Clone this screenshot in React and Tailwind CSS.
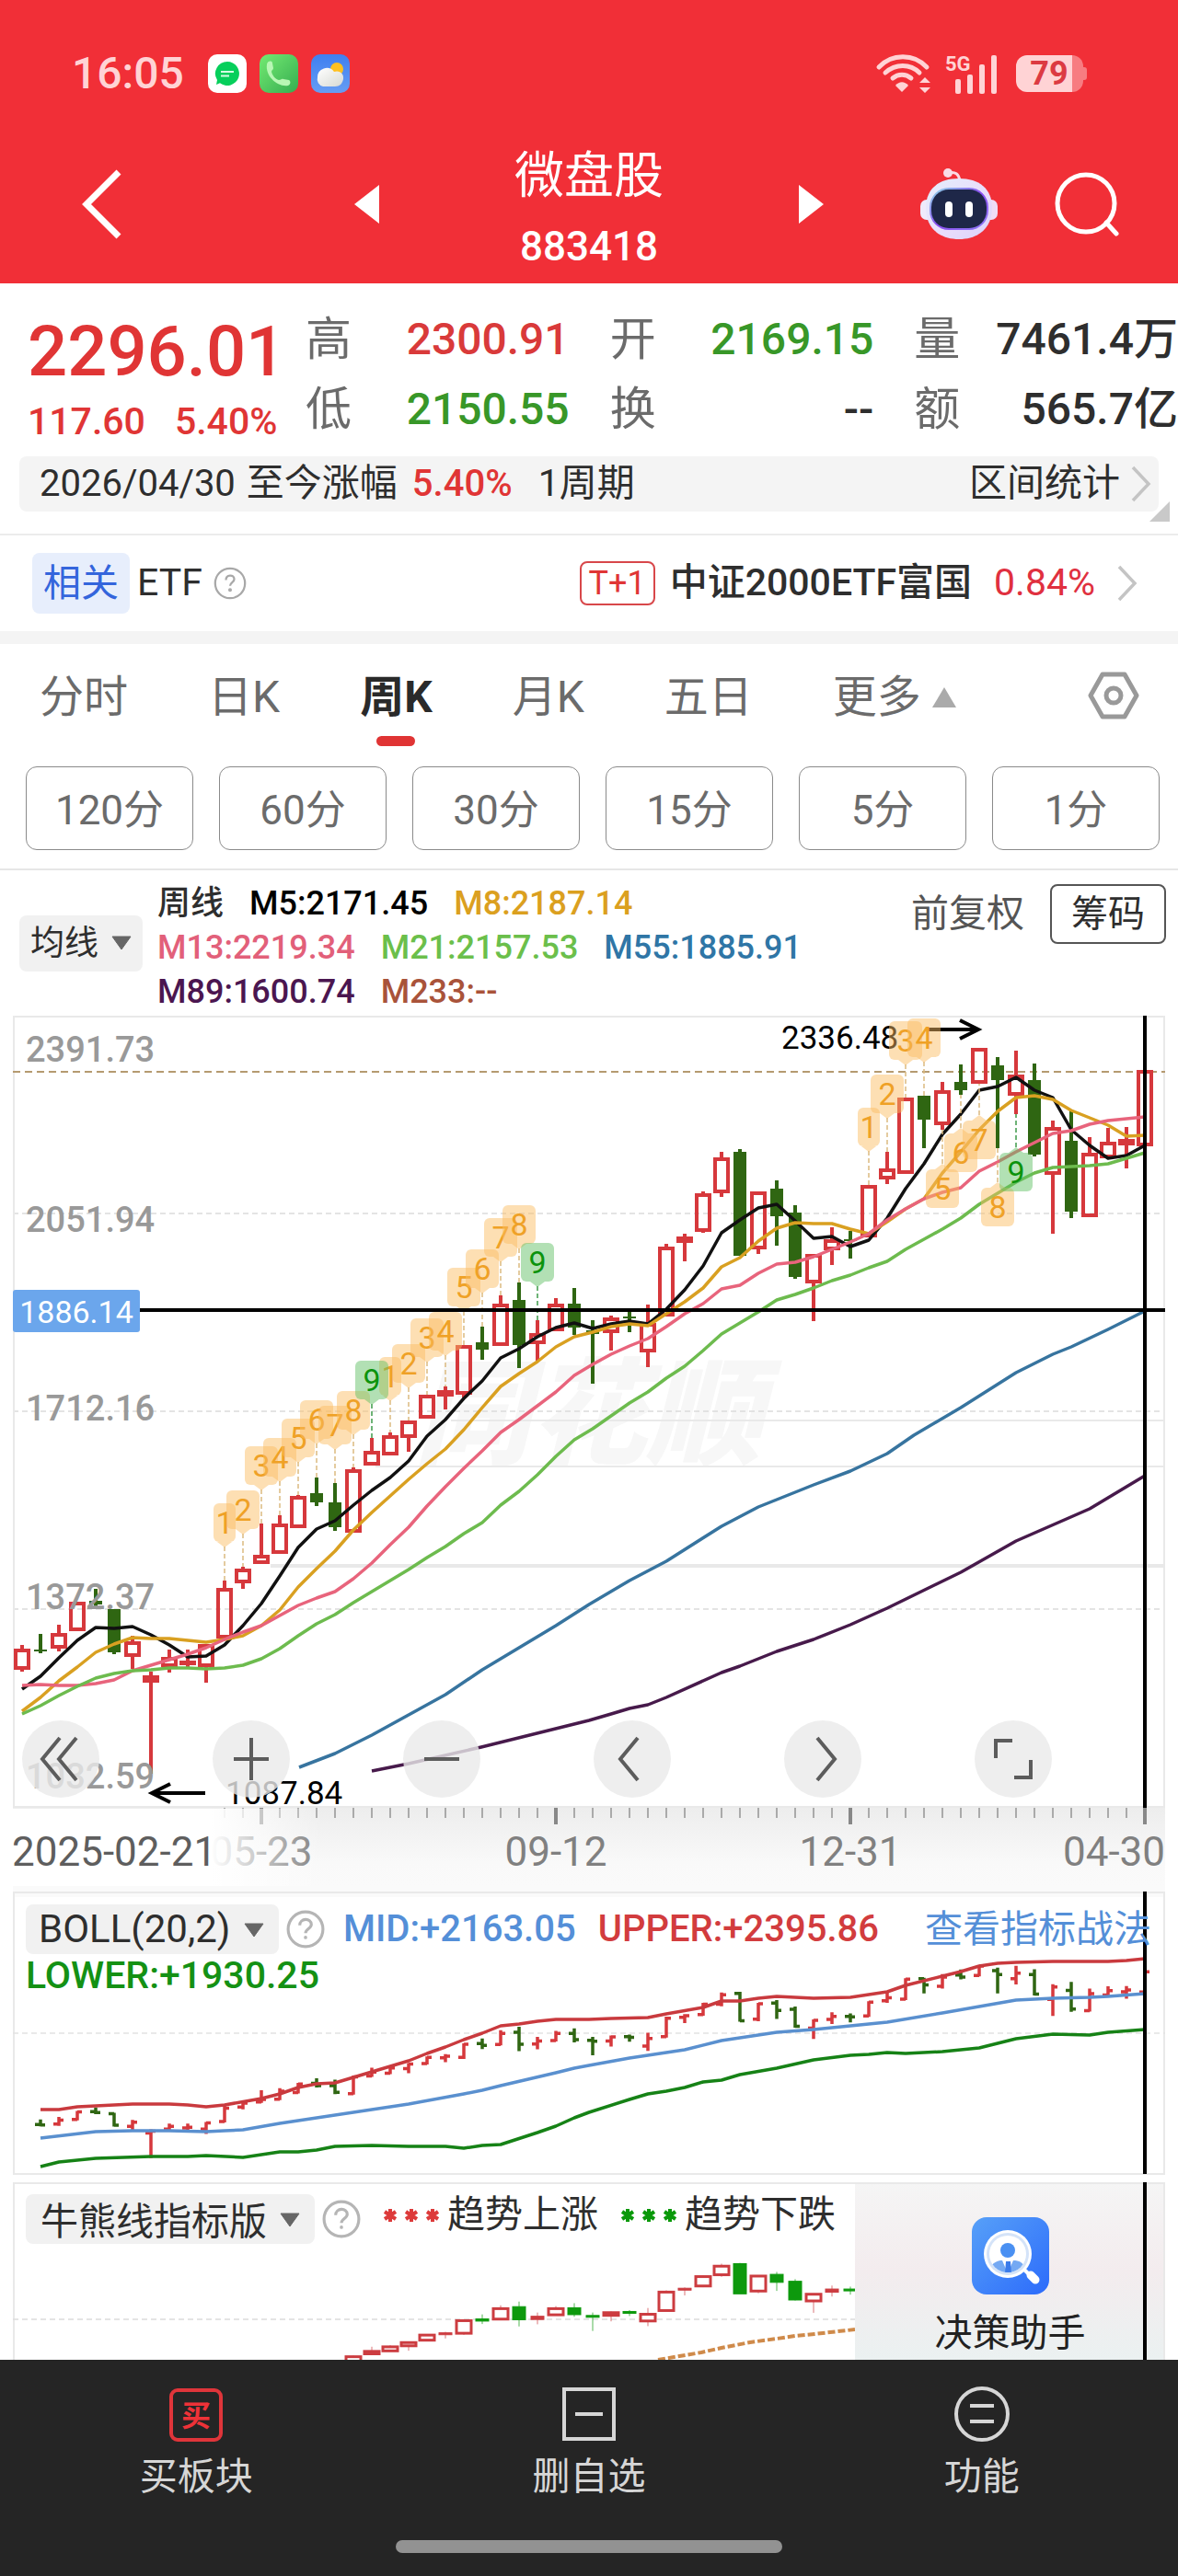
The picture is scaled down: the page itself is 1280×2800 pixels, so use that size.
import React, { useState } from "react";

// [high, body top, body bottom, low, up] in chart units, one entry per week
const candles = [
  [1788, 1792, 1815, 1817, 1], [1776, 1793, 1795, 1797, 0], [1766, 1775, 1792, 1795, 1],
  [1741, 1741, 1773, 1773, 1], [1727, 1740, 1744, 1747, 0], [1749, 1749, 1796, 1798, 0],
  [1778, 1784, 1801, 1814, 1], [1817, 1821, 1829, 1928, 1], [1793, 1801, 1812, 1818, 1],
  [1793, 1805, 1808, 1813, 1], [1787, 1787, 1812, 1829, 1], [1718, 1726, 1781, 1781, 1],
  [1703, 1705, 1721, 1727, 1], [1656, 1690, 1700, 1700, 1], [1647, 1656, 1689, 1689, 1],
  [1625, 1626, 1661, 1661, 1], [1606, 1623, 1633, 1637, 0], [1612, 1633, 1660, 1664, 0],
  [1595, 1597, 1666, 1666, 1], [1563, 1577, 1593, 1593, 1], [1557, 1560, 1582, 1582, 1],
  [1544, 1544, 1563, 1578, 1], [1516, 1516, 1542, 1542, 1], [1507, 1511, 1518, 1532, 1],
  [1462, 1462, 1516, 1519, 1], [1442, 1459, 1467, 1478, 0], [1408, 1417, 1463, 1463, 1],
  [1394, 1413, 1462, 1487, 0], [1435, 1449, 1461, 1479, 1], [1411, 1417, 1447, 1447, 1],
  [1400, 1417, 1443, 1451, 0], [1435, 1446, 1450, 1504, 0], [1430, 1432, 1449, 1468, 1],
  [1426, 1431, 1433, 1448, 0], [1418, 1438, 1470, 1486, 1], [1352, 1355, 1431, 1431, 1],
  [1341, 1344, 1351, 1371, 1], [1295, 1297, 1339, 1340, 1], [1252, 1258, 1297, 1301, 1],
  [1249, 1252, 1365, 1365, 0], [1295, 1295, 1358, 1363, 1], [1283, 1292, 1322, 1354, 0],
  [1310, 1318, 1388, 1390, 0], [1363, 1363, 1395, 1436, 1], [1334, 1347, 1359, 1375, 1],
  [1338, 1347, 1349, 1368, 0], [1288, 1288, 1345, 1345, 1], [1252, 1270, 1282, 1287, 1],
  [1193, 1193, 1276, 1276, 1], [1191, 1191, 1217, 1248, 0], [1176, 1185, 1223, 1228, 1],
  [1157, 1176, 1185, 1190, 0], [1139, 1139, 1178, 1178, 1], [1149, 1158, 1174, 1248, 0],
  [1142, 1168, 1191, 1211, 1], [1156, 1174, 1255, 1257, 0], [1218, 1225, 1277, 1341, 1],
  [1208, 1240, 1317, 1324, 0], [1236, 1253, 1323, 1323, 1], [1226, 1241, 1259, 1260, 1],
  [1225, 1238, 1245, 1270, 1], [1163, 1163, 1246, 1246, 1],
];

const STEP = 20;
const xOf = (i) => 24 + i * STEP;

const ma5 = [
  1836, 1822, 1802, 1783, 1769, 1770, 1768, 1777, 1788, 1801, 1800, 1788, 1767, 1743, 1713, 1682,
  1662, 1653, 1636, 1620, 1606, 1588, 1561, 1543, 1520, 1501, 1476, 1466, 1453, 1443, 1438, 1444,
  1439, 1436, 1439, 1423, 1402, 1376, 1340, 1326, 1313, 1309, 1327, 1346, 1344, 1355, 1348, 1324,
  1292, 1265, 1233, 1211, 1185, 1181, 1171, 1185, 1193, 1228, 1245, 1259, 1256, 1245,
];
const ma8 = [
  1860, 1845, 1827, 1812, 1796, 1787, 1780, 1781, 1781, 1783, 1785, 1782, 1778, 1767, 1750, 1725,
  1705, 1686, 1663, 1644, 1626, 1608, 1591, 1575, 1554, 1530, 1507, 1493, 1480, 1464, 1453, 1448,
  1442, 1439, 1441, 1428, 1415, 1400, 1377, 1367, 1349, 1335, 1329, 1330, 1330, 1336, 1341, 1328,
  1314, 1303, 1275, 1252, 1228, 1208, 1193, 1191, 1195, 1207, 1215, 1223, 1235, 1234,
];
const ma13 = [
  1832, 1831, 1832, 1832, 1830, 1826, 1816, 1810, 1804, 1798, 1791, 1782, 1774, 1767, 1756, 1745,
  1737, 1730, 1716, 1699, 1679, 1660, 1637, 1616, 1596, 1577, 1557, 1543, 1528, 1513, 1495, 1483,
  1472, 1463, 1455, 1442, 1428, 1417, 1401, 1397, 1384, 1374, 1372, 1366, 1358, 1350, 1341, 1326,
  1314, 1303, 1296, 1291, 1273, 1263, 1252, 1242, 1232, 1229, 1222, 1218, 1216, 1214,
];
const ma21 = [
  1863, 1854, 1843, 1833, 1824, 1819, 1816, 1815, 1813, 1813, 1814, 1813, 1810, 1803, 1792, 1778,
  1765, 1755, 1742, 1730, 1718, 1706, 1693, 1681, 1667, 1655, 1636, 1621, 1603, 1583, 1565, 1553,
  1539, 1525, 1513, 1498, 1485, 1468, 1450, 1438, 1426, 1413, 1407, 1400, 1392, 1386, 1378, 1371,
  1358, 1347, 1336, 1324, 1309, 1297, 1285, 1275, 1269, 1268, 1267, 1265, 1259, 1253,
];
const ma55 =
  "325,1921 364,1906 404,1886 444,1864 484,1842 524,1815 564,1791 604,1767 640,1744 684,1718 724,1697 784,1659 824,1638 844,1630 884,1614 924,1599 964,1580 993,1560 1044,1530 1104,1492 1144,1472 1164,1464 1204,1445 1244,1425";
const ma89 =
  "404,1925 444,1917 523,1899 640,1870 664,1863 684,1857 704,1853 724,1845 784,1818 804,1811 844,1795 884,1782 924,1766 964,1748 1044,1709 1104,1675 1184,1640 1244,1604";

const toPoints = (values) => values.map((y, i) => `${xOf(i)},${y}`).join(" ");

// [label, candle index, badge top, position]
const badges = [
  ["1", 11, 1634], ["2", 12, 1620], ["3", 13, 1572], ["4", 14, 1563], ["5", 15, 1542],
  ["6", 16, 1522], ["7", 17, 1528], ["8", 18, 1512], ["1", 20, 1475], ["9", 19, 1479],
  ["2", 21, 1461], ["3", 22, 1433], ["4", 23, 1426], ["5", 24, 1378], ["6", 25, 1358],
  ["7", 26, 1324], ["8", 27, 1310], ["9", 28, 1351], ["1", 46, 1204], ["2", 47, 1168],
  ["3", 48, 1110], ["4", 49, 1107], ["5", 50, 1271, "below"], ["6", 51, 1232, "below"],
  ["7", 52, 1218, "below"], ["8", 53, 1291, "below"], ["9", 54, 1253, "below"],
];

const bollUpper =
  "44,2293 64,2293 84,2290 104,2289 144,2287 184,2287 204,2288 224,2290 244,2288 284,2281 304,2276 324,2269 344,2265 364,2264 384,2258 404,2252 424,2246 444,2240 464,2232 484,2225 504,2217 524,2210 544,2202 564,2200 584,2197 604,2195 640,2195 664,2194 704,2193 724,2189 764,2182 784,2175 804,2175 824,2172 844,2170 884,2172 924,2171 964,2165 984,2158 1024,2148 1044,2143 1064,2137 1084,2134 1104,2133 1144,2132 1204,2132 1224,2131 1244,2129";
const bollMid =
  "44,2324 104,2317 144,2316 184,2316 224,2317 244,2316 264,2315 304,2308 384,2296 444,2287 504,2276 524,2272 544,2267 604,2253 624,2248 640,2245 684,2237 724,2231 744,2228 784,2218 844,2209 884,2206 924,2202 964,2198 1024,2188 1064,2181 1104,2174 1144,2172 1184,2171 1204,2170 1244,2167";
const bollLower =
  "44,2355 64,2350 104,2346 164,2344 204,2344 224,2343 264,2345 304,2339 324,2339 344,2337 364,2333 404,2332 444,2333 484,2333 504,2335 524,2332 544,2331 584,2318 604,2311 624,2302 640,2296 684,2282 704,2276 724,2273 744,2269 764,2263 784,2261 804,2255 844,2248 884,2239 924,2234 944,2233 964,2231 984,2232 1024,2230 1064,2226 1084,2221 1104,2216 1144,2211 1184,2212 1204,2209 1244,2206";

const quotes = [
  ["高", "2300.91", "text-[#d93a3a]"],
  ["开", "2169.15", "text-[#389728]"],
  ["量", "7461.4万", "text-[#2e2e2e]"],
  ["低", "2150.55", "text-[#389728]"],
  ["换", "--", "text-[#2e2e2e]"],
  ["额", "565.7亿", "text-[#2e2e2e]"],
];

const averages = [
  [["周线", "text-[#2e2e2e]"], ["M5:2171.45", "text-black"], ["M8:2187.14", "text-[#dba01f]"]],
  [["M13:2219.34", "text-[#e2607a]"], ["M21:2157.53", "text-[#6bbf4b]"], ["M55:1885.91", "text-[#2f76a6]"]],
  [["M89:1600.74", "text-[#4b1650]"], ["M233:--", "text-[#a9533a]"]],
];

function Caret({ className = "" }) {
  return (
    <svg viewBox="0 0 22 16" className={`pointer-events-none h-4 w-[22px] ${className}`} aria-hidden="true">
      <path d="M1 1h20L11 15z" fill="#666" stroke="#666" strokeLinejoin="round" />
    </svg>
  );
}

function Help({ label }) {
  return (
    <button aria-label={label} className="shrink-0">
      <svg viewBox="0 0 40 40" className="size-[42px]" fill="none" stroke="#b5b5b5" strokeWidth="3">
        <circle cx="20" cy="20" r="18" />
        <path d="M14 16c0-8 12-8 12-1 0 4.500-6 4.500-6 9" />
        <circle cx="20" cy="28.500" r="1" fill="#b5b5b5" strokeWidth="1.500" />
      </svg>
    </button>
  );
}

function Chevron({ className }) {
  return (
    <svg viewBox="0 0 22 40" className={className} fill="none" stroke="#c4c4c4" strokeWidth="3.500" aria-hidden="true">
      <path d="M2 2l17 18L2 38" />
    </svg>
  );
}

function StatusBar() {
  return (
    <div className="flex h-[148px] items-center justify-between pt-3 pr-[98px] pl-[78px] text-[#ffd3d5]">
      <div className="flex items-center">
        <span className="text-[48px] leading-none font-medium">16:05</span>
        <div className="ml-[26px] flex gap-[14px]">
          <svg viewBox="0 0 42 42" className="size-[42px]">
            <rect width="42" height="42" rx="10" fill="#fff" />
            <path d="M21 8a13 13 0 1 1-8 23.300L9 33l1-5A13 13 0 0 1 21 8z" fill="#06cf5b" />
            <path d="M14 19h14M14 23.500h9" stroke="#d5fbe4" strokeWidth="2" />
          </svg>
          <svg viewBox="0 0 42 42" className="size-[42px]">
            <defs>
              <linearGradient id="phone" x2="1" y2="1">
                <stop stopColor="#74ea72" />
                <stop offset="1" stopColor="#35ad50" />
              </linearGradient>
            </defs>
            <rect width="42" height="42" rx="10" fill="url(#phone)" />
            <path
              d="M10 8c3-1 4 0 4 2l1 5c0 2-2 2-2 4 1 4 4 8 8 9 2 0 3-2 5-1l6 1c2 1 2 5-1 6C20 36 6 24 8 11c0-1 1-3 2-3z"
              fill="#b8f7b4"
            />
          </svg>
          <svg viewBox="0 0 42 42" className="size-[42px]">
            <defs>
              <linearGradient id="sky" x2="0" y2="1">
                <stop stopColor="#3f7ff0" />
                <stop offset="1" stopColor="#669df4" />
              </linearGradient>
              <linearGradient id="cloud" x2="1" y2="1">
                <stop stopColor="#fff" />
                <stop offset="1" stopColor="#d7d9d3" />
              </linearGradient>
            </defs>
            <rect width="42" height="42" rx="10" fill="url(#sky)" />
            <circle cx="28" cy="16" r="7" fill="#ffc01f" />
            <path d="M13 35a8 8 0 0 1-6-10 10 10 0 0 1 18-6c6-2 11 2 10 8-1 5-4 8-9 8z" fill="url(#cloud)" />
          </svg>
        </div>
      </div>
      <div className="flex items-center">
        <svg viewBox="0 0 60 44" className="h-11 w-[60px]" fill="none" stroke="#ffd3d5" strokeWidth="5" strokeLinecap="round">
          <path d="M4 15c14-15 38-15 52 0M11 21c11-10 27-10 37 0M19 27c6-5 14-5 20 0" />
          <path d="M29 42l-7-7c4-5 10-5 14 0z" fill="#ffd3d5" stroke="none" />
          <path d="M48 32l6-6 6 6zM48 37l6 6 6-6z" fill="#ffd3d5" stroke="none" />
        </svg>
        <svg viewBox="0 0 58 52" className="mb-2 ml-4 h-[52px] w-[58px]" fill="#ffd3d5">
          <text x="0" y="27" fontSize="22" fontWeight="700">5G</text>
          <rect x="11" y="36" width="6" height="16" rx="2" />
          <rect x="24" y="31" width="6" height="21" rx="2" />
          <rect x="37" y="20" width="6" height="32" rx="2" />
          <rect x="50" y="10" width="6" height="42" rx="2" />
        </svg>
        <svg viewBox="0 0 78 40" className="ml-[19px] h-10 w-[78px]">
          <path d="M12 0h49v40H12A12 12 0 0 1 0 28V12A12 12 0 0 1 12 0z" fill="#ffd3d5" />
          <path d="M61 0a12 12 0 0 1 12 12v16a12 12 0 0 1-12 12z" fill="#f77c81" />
          <path d="M73 13h1a3 3 0 0 1 3 3v8a3 3 0 0 1-3 3h-1z" fill="#f77c81" />
          <text x="36" y="32" fontSize="36" fontWeight="700" textAnchor="middle" fill="#dc3a42">79</text>
        </svg>
      </div>
    </div>
  );
}

function Header() {
  return (
    <header className="bg-[#f12f37] text-white">
      <StatusBar />
      <div className="grid h-40 grid-cols-[1fr_auto_1fr] items-center">
        <div className="mb-3 flex items-center justify-between pr-[147px] pl-[88px]">
          <button aria-label="返回">
            <svg viewBox="0 0 44 76" className="h-[76px] w-11" fill="none" stroke="#fff" strokeWidth="7">
              <path d="M41 3L6 38l35 35" />
            </svg>
          </button>
          <button aria-label="上一个">
            <svg viewBox="0 0 27 42" className="h-[42px] w-[27px]" fill="#fff">
              <path d="M27 0v42L0 21z" />
            </svg>
          </button>
        </div>
        <div className="pt-1 text-center leading-[76px]">
          <h1 className="text-[54px]">微盘股</h1>
          <p className="text-[44px] font-medium">883418</p>
        </div>
        <div className="mb-3 flex items-center pl-[147px]">
          <button aria-label="下一个">
            <svg viewBox="0 0 27 42" className="h-[42px] w-[27px]" fill="#fff">
              <path d="M0 0v42l27-21z" />
            </svg>
          </button>
          <button aria-label="智能助理" className="ml-[105px]">
            <svg viewBox="0 0 84 78" className="h-[78px] w-[84px]">
              <defs>
                <linearGradient id="shell" x2="1" y2="1">
                  <stop stopColor="#e4eefc" />
                  <stop offset="0.600" stopColor="#e9dcfb" />
                  <stop offset="1" stopColor="#d9d2fb" />
                </linearGradient>
                <linearGradient id="rim" x2="1" y2="1">
                  <stop stopColor="#8fe0e6" />
                  <stop offset="0.500" stopColor="#8a4df0" />
                  <stop offset="1" stopColor="#8f7cf5" />
                </linearGradient>
              </defs>
              <path d="M30 5c8-2 12 1 13 9" fill="none" stroke="#fbd9e3" strokeWidth="3" />
              <circle cx="30" cy="5" r="5" fill="#f9dbe6" />
              <rect x="0" y="34" width="16" height="22" rx="7" fill="#efeafb" />
              <rect x="68" y="34" width="16" height="22" rx="7" fill="#efdcf6" />
              <path d="M42 11c22 0 36 11 36 32 0 22-15 34-36 34S6 65 6 43c0-21 14-32 36-32z" fill="url(#shell)" />
              <rect x="10" y="21" width="64" height="46" rx="21" fill="url(#rim)" />
              <rect x="12" y="23" width="60" height="42" rx="19" fill="#1e2748" />
              <rect x="27" y="36" width="8" height="17" rx="4" fill="#fff" />
              <rect x="49" y="36" width="8" height="17" rx="4" fill="#fff" />
            </svg>
          </button>
          <button aria-label="搜索" className="ml-[62px]">
            <svg viewBox="0 0 72 72" className="size-[72px]" fill="none" stroke="#fff" strokeWidth="5">
              <circle cx="34" cy="35" r="31" />
              <path d="M56 56l11 12" strokeLinecap="round" />
            </svg>
          </button>
        </div>
      </div>
    </header>
  );
}

function QuoteSummary() {
  return (
    <section className="relative border-b-2 border-[#ececec] pb-6">
      <div className="flex">
        <div className="mt-9 w-[332px] shrink-0 pl-[30px] text-[#e03535]">
          <p className="text-[76px] leading-[76px] font-medium">2296.01</p>
          <p className="flex gap-8 text-[41px] leading-[76px] font-medium">
            <span>117.60</span>
            <span>5.40%</span>
          </p>
        </div>
        <dl className="mt-[23px] grid h-[152px] flex-1 grid-cols-3 gap-x-11 leading-[76px]">
          {quotes.map(([name, value, color]) => (
            <div key={name} className="flex justify-between whitespace-nowrap">
              <dt className="text-[50px] text-[#6b6b6b]">{name}</dt>
              <dd className={`text-[48px] font-medium ${color}`}>{value}</dd>
            </div>
          ))}
        </dl>
      </div>
      <div className="mx-[21px] flex h-[60px] items-center rounded-lg bg-[#f4f4f4] pr-2 pl-[22px] text-[41px] text-[#2e2e2e]">
        <span className="text-[40px]">2026/04/30</span>
        <span className="ml-3">至今涨幅</span>
        <span className="ml-4 text-[40px] font-medium text-[#e03535]">5.40%</span>
        <span className="ml-7">1周期</span>
        <button className="ml-auto flex items-center gap-3">
          区间统计
          <Chevron className="h-10 w-[22px]" />
        </button>
      </div>
      <svg viewBox="0 0 22 22" className="absolute right-[9px] bottom-[13px] size-[22px]" fill="#c9c9c9">
        <path d="M22 0v22H0z" />
      </svg>
    </section>
  );
}

function EtfRow() {
  return (
    <a
      href="#etf"
      className="flex h-[118px] items-center border-b-[14px] border-[#f4f4f4] pr-11 pl-[35px] text-[41px] text-[#2e2e2e]"
    >
      <span className="rounded-lg bg-[#e7eefc] px-3 leading-[66px] text-[#3465dc]">相关</span>
      <span className="mr-3 ml-2">ETF</span>
      <svg viewBox="0 0 40 40" className="size-9" fill="none" stroke="#a8a8a8" strokeWidth="2.500">
        <circle cx="20" cy="20" r="18" />
        <path d="M15 16c0-7 10-7 10-1 0 4-5 4-5 8" />
        <circle cx="20" cy="28" r="1" />
      </svg>
      <span className="ml-auto rounded-lg border-2 border-[#d8474a] px-2 text-[36px] leading-[44px] text-[#e03535]">T+1</span>
      <span className="ml-4 font-medium">中证2000ETF富国</span>
      <span className="ml-6 text-[#e0303f]">0.84%</span>
      <Chevron className="ml-6 h-10 w-[22px]" />
    </a>
  );
}

const tabs = ["分时", "日K", "周K", "月K", "五日"];
const minutes = ["120分", "60分", "30分", "15分", "5分", "1分"];

function PeriodTabs() {
  const [active, setActive] = useState("周K");

  return (
    <nav className="border-b-2 border-[#e6e6e6] pb-5">
      <div className="flex items-start gap-[87px] pr-[42px] pl-[43px] text-[48px] leading-[76px] text-[#6b6b6b]">
        {tabs.map((tab) => (
          <button key={tab} onClick={() => setActive(tab)} className="flex h-[113px] flex-col items-center pt-5">
            <span className={active === tab ? "font-bold text-[#2a2a2a]" : ""}>{tab}</span>
            {active === tab && <span className="mt-1 h-[11px] w-[42px] shrink-0 rounded-md bg-[#e03434]" />}
          </button>
        ))}
        <button className="flex items-center gap-3 pt-5">
          更多
          <svg viewBox="0 0 26 22" className="h-[22px] w-[26px]" fill="#aaa">
            <path d="M13 0l13 22H0z" />
          </svg>
        </button>
        <button aria-label="设置" className="ml-auto pt-[30px]">
          <svg viewBox="0 0 56 52" className="h-[52px] w-14" fill="none" stroke="#999" strokeWidth="5" strokeLinejoin="round">
            <path d="M16 3h24l13 23-13 23H16L3 26z" />
            <circle cx="28" cy="26" r="8" />
          </svg>
        </button>
      </div>
      <div className="mt-5 grid grid-cols-6 gap-7 pr-5 pl-7">
        {minutes.map((label) => (
          <button key={label} className="h-[91px] rounded-xl border border-[#8a8a8a] pt-1 text-[44px] text-[#6b6b6b]">
            {label}
          </button>
        ))}
      </div>
    </nav>
  );
}

function AverageLegend() {
  return (
    <section className="flex px-[21px] pt-3 pb-0.5 text-[36px]">
      <label className="relative mt-[37px] h-[61px] self-start rounded-lg bg-[#f1f1f1]">
        <select aria-label="均线" className="h-full appearance-none pr-12 pl-3 text-[37px] text-[#2e2e2e]">
          <option>均线</option>
        </select>
        <Caret className="absolute top-[22px] right-3" />
      </label>
      <div className="ml-4 leading-[48px] font-medium">
        {averages.map((row, i) => (
          <div key={i} className="flex gap-7">
            {row.map(([text, color]) => (
              <span key={text} className={color}>{text}</span>
            ))}
          </div>
        ))}
      </div>
      <div className="mt-[3px] -mr-2 ml-auto flex h-[65px] gap-7">
        <button className="text-[41px] text-[#555]">前复权</button>
        <button className="w-[126px] rounded-lg border-2 border-[#555] text-[40px] text-[#2e2e2e]">筹码</button>
      </div>
    </section>
  );
}

function Badge({ label, index, top, below }) {
  const x = xOf(index);
  const half = label === "1" ? 12 : 18;
  const green = label === "9";
  const fill = green ? "#5fc063" : "#fbbd62";
  const tip = below ? top - 6 : top + 47;
  const [high, , , low] = candles[index];

  return (
    <g>
      <path
        d={`M${x} ${tip}V${below ? low : high}`}
        stroke={green ? "#3e9a4a" : "#dcbb80"}
        strokeWidth="1.500"
        strokeDasharray="5 3"
      />
      <g fill={fill} opacity="0.480">
        <rect x={x - half} y={top} width={half * 2} height="42" rx="6" />
        <path d={below ? `M${x - 8} ${top}l8-6 8 6z` : `M${x - 8} ${top + 42}l8 6 8-6z`} />
      </g>
      <text x={x} y={top + 33} fontSize="34" textAnchor="middle" fill={green ? "#0c930c" : "#efa126"}>
        {label}
      </text>
    </g>
  );
}

function Candle({ index, data }) {
  const [high, top, bottom, low, up] = data;
  const x = xOf(index);

  if (!up) {
    return (
      <g fill="#2f6612">
        <rect x={x - 2} y={high} width="4" height={low - high} />
        <rect x={x - 7} y={top} width="14" height={bottom - top} />
      </g>
    );
  }
  return (
    <g stroke="#d6383c" strokeWidth="4" fill="none">
      <path d={`M${x} ${high}V${top}M${x} ${bottom}V${low}`} />
      <rect x={x - 7} y={top + 2} width="14" height={Math.max(bottom - top - 4, 1)} />
    </g>
  );
}

const controls = [
  ["快退", "M41 19L22 42l19 23M59 19L40 42l19 23"],
  ["放大", "M42 19v46M23 42h38"],
  ["缩小", "M23 42h38"],
  ["左移", "M48 19L29 42l19 23"],
  ["右移", "M36 19l19 23-19 23"],
  ["全屏", "M41 22H23v19M43 62h18V43"],
];

function MainChart() {
  const ticks = candles.map((_, i) => i).filter((i) => i >= 11);

  return (
    <section className="relative">
      <svg viewBox="0 1104 1280 946" className="block w-full">
        <defs>
          <linearGradient id="strip" x2="0" y2="1">
            <stop stopColor="#ededed" />
            <stop offset="0.700" stopColor="#f9f9f9" />
            <stop offset="1" stopColor="#fafafa" />
          </linearGradient>
          <linearGradient id="fade">
            <stop offset="0.640" stopColor="#fff" />
            <stop offset="1" stopColor="#fff" stopOpacity="0" />
          </linearGradient>
        </defs>

        <text x="828" y="1582" fontSize="126" fontWeight="900" fontStyle="italic" textAnchor="end" fill="#f7f7f7">
          同花顺
        </text>
        <g stroke="#e9e9e9" fill="none">
          <path d="M490 1544H1266M408 1594H1266" strokeWidth="2" />
          <path d="M294 1702H1266" strokeWidth="4" />
          <path d="M14 1319H1266M14 1534H1266M14 1749H1266" stroke="#dcdcdc" strokeWidth="1.500" strokeDasharray="6 4" />
          <rect x="15" y="1105" width="1250" height="859" strokeWidth="2" />
        </g>
        <path d="M14 1165H1266" stroke="#b59a70" strokeWidth="2" strokeDasharray="8 5" />

        {candles.map((data, i) => (
          <Candle key={i} index={i} data={data} />
        ))}

        <g fill="none" strokeWidth="3.500" strokeLinejoin="round">
          <polyline points={toPoints(ma5)} stroke="#111" />
          <polyline points={toPoints(ma8)} stroke="#d9a021" />
          <polyline points={toPoints(ma13)} stroke="#e8647c" />
          <polyline points={toPoints(ma21)} stroke="#6dbb4e" />
          <polyline points={ma55} stroke="#37749f" />
          <polyline points={ma89} stroke="#471a4b" />
        </g>

        <g fontSize="38" fontWeight="500" fill="#999">
          <text x="28" y="1154">2391.73</text>
          <text x="28" y="1339">2051.94</text>
          <text x="28" y="1544">1712.16</text>
          <text x="28" y="1749">1372.37</text>
          <text x="28" y="1944">1032.59</text>
        </g>

        <g fontSize="35" fill="#000">
          <text x="849" y="1140">2336.48</text>
          <text x="245" y="1961">1087.84</text>
        </g>
        <g fill="none" stroke="#000" strokeWidth="4">
          <path d="M1007 1119h56M1043 1109l20 10-20 10" />
          <path d="M223 1949h-58M185 1939l-20 10 20 10" />
        </g>

        {badges.map(([label, index, top, place]) => (
          <Badge key={index} label={label} index={index} top={top} below={place === "below"} />
        ))}

        <path d="M152 1424H1266M1244 1104V1965" stroke="#000" strokeWidth="4" />
        <rect x="14" y="1402" width="138" height="46" rx="3" fill="#6ba6ec" />
        <text x="83" y="1438" fontSize="34" textAnchor="middle" fill="#fff">1886.14</text>

        <rect x="14" y="1965" width="1252" height="85" fill="url(#strip)" />
        {ticks.map((i) => {
          const major = i % 16 === 13;
          return (
            <rect
              key={i}
              x={xOf(i) - (major ? 2 : 1)}
              y="1965"
              width={major ? 4 : 2}
              height={major ? 18 : 11}
              fill={major ? "#888" : "#aaa"}
            />
          );
        })}
        <g fontSize="44" fill="#808080" textAnchor="middle">
          <text x="284" y="2028">05-23</text>
          <text x="604" y="2028">09-12</text>
          <text x="924" y="2028">12-31</text>
          <text x="1266" y="2028" textAnchor="end">04-30</text>
        </g>
        <rect x="14" y="1966" width="336" height="84" fill="url(#fade)" />
        <text x="13" y="2028" fontSize="44" fill="#5e5e5e">2025-02-21</text>
      </svg>

      <div className="absolute inset-x-0 bottom-24 flex gap-[123px] pl-6">
        {controls.map(([label, path]) => (
          <button key={label} aria-label={label} className="size-[84px] rounded-full bg-[#eaeaea]/80">
            <svg viewBox="0 0 84 84" fill="none" stroke="#5c5c5c" strokeWidth="4">
              <path d={path} />
            </svg>
          </button>
        ))}
      </div>
    </section>
  );
}

// week bars share the price data with the main chart, only the scale is flatter
const bollY = (y) => 2137 + (y - 1139) * 0.2632;
const trendY = (y) => 2460.5 + (y - 1252) * 0.2903;

function BollPanel() {
  return (
    <section className="relative">
      <svg viewBox="0 2050 1280 316" className="block w-full">
        <rect x="14" y="2050" width="1252" height="12" fill="#fafafa" />
        <rect x="15" y="2057" width="1250" height="306" fill="none" stroke="#e9e9e9" strokeWidth="2" />
        <path d="M14 2210H1266" stroke="#e2e2e2" strokeWidth="1.500" strokeDasharray="6 4" />
        {candles.slice(1).map(([high, top, bottom, low, up], n) => {
          const x = xOf(n + 1);
          const open = bollY(up ? bottom : top);
          const close = bollY(up ? top : bottom);
          return (
            <path
              key={n}
              d={`M${x} ${bollY(high) - 1}V${bollY(low) + 1}M${x - 6} ${open}H${x}M${x} ${close}h5`}
              stroke={up ? "#d6383c" : "#2f6612"}
              strokeWidth="3.500"
            />
          );
        })}
        <g fill="none" strokeWidth="3.500" strokeLinejoin="round">
          <polyline points={bollUpper} stroke="#c93a3e" />
          <polyline points={bollMid} stroke="#5a90cf" />
          <polyline points={bollLower} stroke="#168216" />
        </g>
        <path d="M1244 2056V2363" stroke="#000" strokeWidth="4" />
      </svg>
      <div className="absolute inset-x-0 top-5 pl-7 text-[40px] leading-[46px] font-medium">
        <div className="flex h-[54px] items-center">
          <label className="relative h-full rounded-lg bg-[#f1f1f1]">
            <select
              aria-label="指标"
              className="h-full appearance-none pr-[52px] pl-[14px] text-[42px] leading-[54px] font-normal text-[#2e2e2e]"
            >
              <option>BOLL(20,2)</option>
            </select>
            <Caret className="absolute top-5 right-4" />
          </label>
          <span className="ml-2 flex">
            <Help label="指标说明" />
          </span>
          <span className="ml-5 text-[#548fd8]">MID:+2163.05</span>
          <span className="ml-6 text-[#d23c3e]">UPPER:+2395.86</span>
          <a href="#guide" className="mr-[29px] ml-auto text-[41px] font-normal text-[#548fd8]">查看指标战法</a>
        </div>
        <p className="text-[41px] text-[#149114]">LOWER:+1930.25</p>
      </div>
    </section>
  );
}

function TrendPanel() {
  return (
    <section className="relative overflow-hidden">
      <button className="absolute top-1.5 right-[14px] flex h-[193px] w-[337px] flex-col items-center bg-linear-to-b from-[#f5f5f5] via-[#f3ecee] to-[#ebf1f1] pt-[38px]">
        <svg viewBox="0 0 84 84" className="size-[84px] shrink-0">
          <defs>
            <linearGradient id="assist" x2="1" y2="1">
              <stop stopColor="#57a0f8" />
              <stop offset="1" stopColor="#2c6bfb" />
            </linearGradient>
            <clipPath id="lens">
              <circle cx="39" cy="40" r="20" />
            </clipPath>
          </defs>
          <rect width="84" height="84" rx="16" fill="url(#assist)" />
          <path d="M57 57l5 5" stroke="#fff" strokeWidth="4" />
          <path d="M64 63l5 5" stroke="#fff" strokeWidth="9" strokeLinecap="round" />
          <circle cx="39" cy="40" r="26" fill="#fff" />
          <circle cx="39" cy="40" r="23" fill="#d4e3f8" />
          <circle cx="39" cy="40" r="20" fill="#fff" />
          <g clipPath="url(#lens)">
            <circle cx="39" cy="36" r="8" fill="#4a90f2" />
            <path d="M18 61c2-11 9-14 15-14l6 14 6-14c7 0 13 3 15 14z" fill="#74a9f3" />
            <path d="M37 48h5l1 13h-7z" fill="#3b7bea" />
          </g>
        </svg>
        <span className="mt-3 text-[41px] leading-[60px] text-[#222]">决策助手</span>
      </button>
      <svg viewBox="0 2366 1280 199" className="pointer-events-none relative block w-full">
        <defs>
          <clipPath id="trend">
            <rect x="14" y="2366" width="915" height="199" />
          </clipPath>
        </defs>
        <path d="M15 2565V2373H1265V2565" fill="none" stroke="#e9e9e9" strokeWidth="2" />
        <path d="M14 2521H929" stroke="#dcdcdc" strokeWidth="1.500" strokeDasharray="6 4" />
        <g clipPath="url(#trend)">
          {candles.map(([high, top, bottom, low, up], i) => {
            const x = xOf(i);
            const y = trendY(top);
            const height = Math.max(trendY(bottom) - y, 2);
            const color = up ? "#cc3c40" : "#0d990d";
            if (i < 18) return null;
            return (
              <g key={i} stroke={color}>
                <path d={`M${x} ${trendY(high)}V${y}M${x} ${y + height}V${trendY(low)}`} opacity="0.700" />
                {up && height > 4 ? (
                  <rect x={x - 8} y={y + 1} width="16" height={height - 2} fill="#fff" strokeWidth="3" />
                ) : (
                  <rect x={x - 7} y={y} width="14" height={height} fill={color} />
                )}
              </g>
            );
          })}
          <polyline
            points="715,2565 762,2557 784,2552 815,2546 844,2542 864,2539 885,2537 929,2532"
            fill="none"
            stroke="#cf8a4a"
            strokeWidth="4"
            strokeDasharray="8 3"
          />
        </g>
        <path d="M1244 2372V2565" stroke="#000" strokeWidth="4" />
      </svg>
      <div className="absolute top-[19px] left-7 flex h-[54px] items-center text-[41px] text-[#2e2e2e]">
        <label className="relative h-full rounded-lg bg-[#f1f1f1]">
          <select aria-label="副图指标" className="h-full appearance-none pr-[52px] pl-4 leading-[54px]">
            <option>牛熊线指标版</option>
          </select>
          <Caret className="absolute top-5 right-4" />
        </label>
        <span className="ml-2 flex">
          <Help label="牛熊线说明" />
        </span>
        <span className="mb-2 ml-6 flex items-center gap-2">
          <Stars className="text-[#dd3a3a]" />
          趋势上涨
        </span>
        <span className="mb-2 ml-6 flex items-center gap-2">
          <Stars className="text-[#0a990a]" />
          趋势下跌
        </span>
      </div>
    </section>
  );
}

function Stars({ className }) {
  return (
    <svg viewBox="0 0 62 18" className={`h-[18px] w-[62px] ${className}`} stroke="currentColor" strokeWidth="4" aria-hidden="true">
      {[8, 31, 54].map((x) => (
        <path key={x} d={`M${x} 2v14M${x - 6} 5l12 8M${x + 6} 5l-12 8`} />
      ))}
    </svg>
  );
}

function BottomBar() {
  return (
    <footer className="flex h-[235px] flex-col bg-[#252525] text-[41px] text-[#d6d6d6]">
      <div className="grid grid-cols-3 pt-7">
        <button className="flex flex-col items-center">
          <svg viewBox="0 0 60 62" className="h-[62px] w-[60px]">
            <rect x="3" y="5" width="54" height="54" rx="7" fill="none" stroke="#e0353a" strokeWidth="4" />
            <text x="30" y="44" fontSize="32" fontWeight="700" textAnchor="middle" fill="#ee3238">买</text>
          </svg>
          <span className="mt-1.5 leading-[62px]">买板块</span>
        </button>
        <button className="flex flex-col items-center">
          <svg viewBox="0 0 60 62" className="h-[62px] w-[60px]" fill="none" stroke="#d6d6d6" strokeWidth="4">
            <rect x="3" y="4" width="54" height="54" />
            <path d="M15 31h30" />
          </svg>
          <span className="mt-1.5 leading-[62px]">删自选</span>
        </button>
        <button className="flex flex-col items-center">
          <svg viewBox="0 0 62 62" className="size-[62px]" fill="none" stroke="#d6d6d6" strokeWidth="4">
            <circle cx="31" cy="31" r="28" />
            <path d="M18 22h26M18 39h26" />
          </svg>
          <span className="mt-1.5 leading-[62px]">功能</span>
        </button>
      </div>
      <div className="mt-auto mb-[25px] h-[14px] w-[420px] self-center rounded-full bg-[#929292]" />
    </footer>
  );
}

export default function App() {
  return (
    <div className="bg-white font-['Roboto','Noto_Sans_CJK_SC',sans-serif]">
      <Header />
      <main>
        <QuoteSummary />
        <EtfRow />
        <PeriodTabs />
        <AverageLegend />
        <MainChart />
        <BollPanel />
        <TrendPanel />
      </main>
      <BottomBar />
    </div>
  );
}
